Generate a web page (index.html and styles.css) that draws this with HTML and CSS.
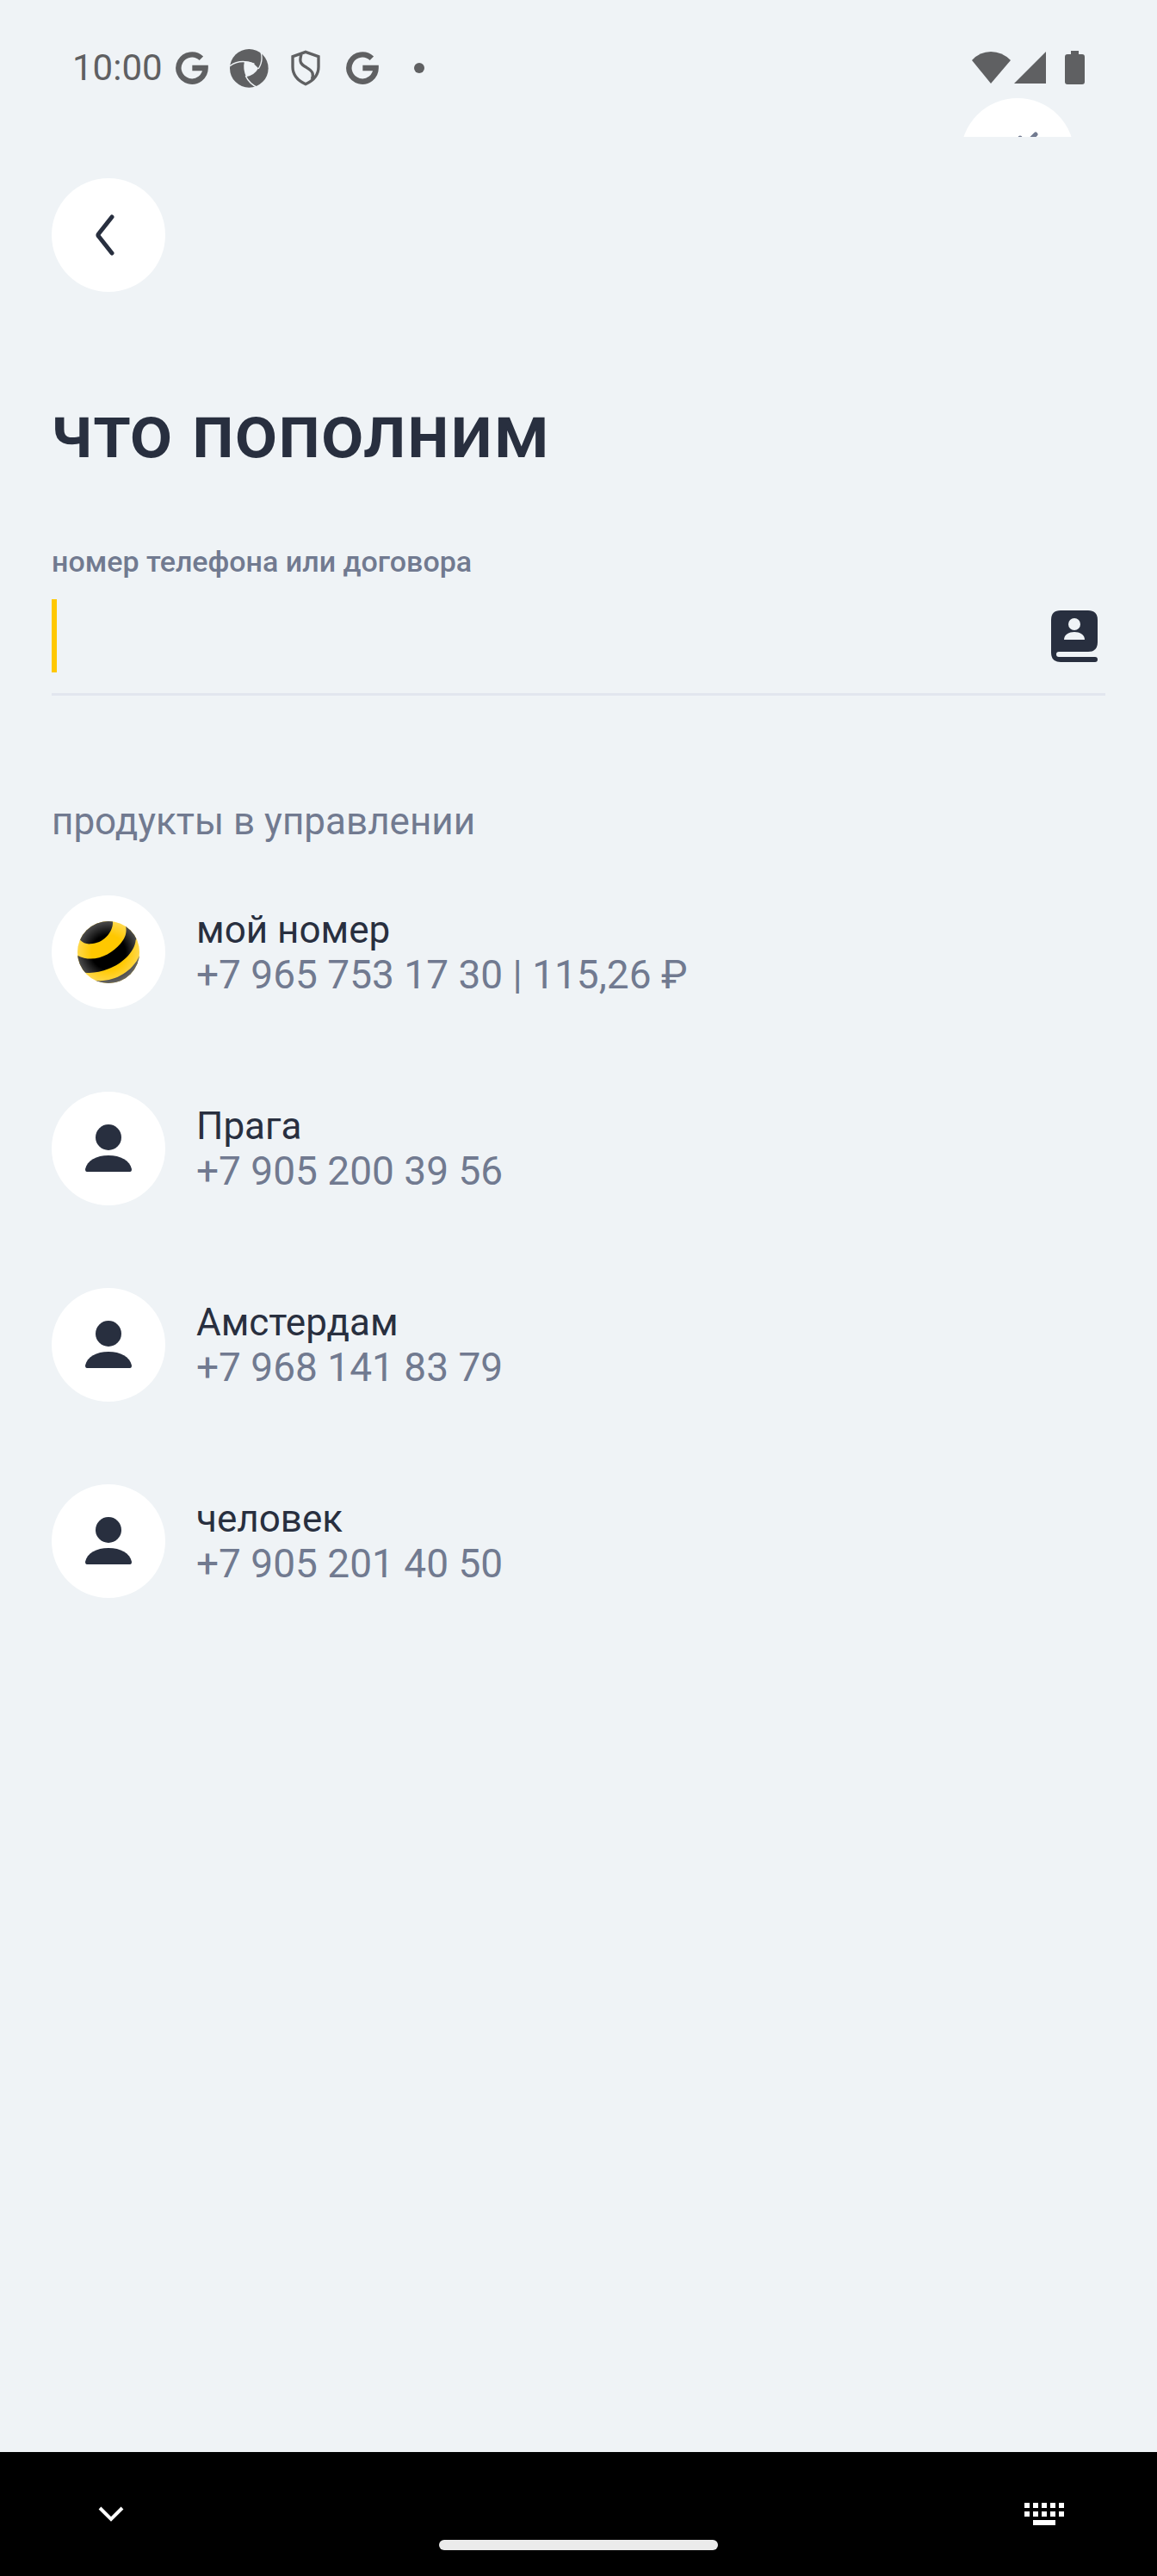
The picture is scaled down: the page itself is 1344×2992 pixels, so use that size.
FILE: index.html
```html
<!DOCTYPE html>
<html lang="ru">
<head>
<meta charset="utf-8">
<meta name="viewport" content="width=device-width, initial-scale=1">
<title>что пополним</title>
<link rel="stylesheet" href="styles.css">
</head>
<body>
<svg class="sprite" aria-hidden="true">
  <symbol id="icon-g" viewBox="0 0 112 112"><path d="M88 23A46 46 0 1 0 102 56H57" fill="none" stroke="currentColor" stroke-width="19"/></symbol>
  <symbol id="icon-person" viewBox="0 0 54 56"><circle cx="27" cy="15" r="15"/><path d="M2 55Q0 55 0 52C2 42 13 36 27 36S52 42 54 52Q54 55 52 55Z"/></symbol>
</svg>
<header class="status">
  <time class="clock">10:00</time>
  <span class="slot"><svg width="38" height="38"><use href="#icon-g"/></svg></span>
  <span class="slot"><svg width="45" height="45" viewBox="0 0 133 133"><circle cx="66" cy="66" r="66" fill="currentColor"/><g class="cut"><path d="M50 43Q70 41 82 50L98 66Q84 91 56 95Q44 69 50 43Z" stroke="none"/><path d="M0 58Q35 32 84 51M98 68Q116 40 106 8M54 92Q68 121 98 133" fill="none" stroke-width="4"/></g></svg></span>
  <span class="slot"><svg width="34" height="42" viewBox="0 0 102 124" fill="none" stroke="currentColor" stroke-width="10"><path d="M51 6 96 22V58C96 88 77 106 51 118C25 106 6 88 6 58V22Z"/><path d="M36 14C28 42 34 49 54 60C76 73 80 82 73 101"/></svg></span>
  <span class="slot"><svg width="38" height="38"><use href="#icon-g"/></svg></span>
  <span class="slot"><span class="dot"></span></span>
  <svg class="system" width="132" height="40" viewBox="0 0 132 40" fill="currentColor"><path d="M1 11Q10 1 23 1T46 11L23 38Z"/><path d="M87 1V38H50Z"/><path d="M116 0H125V4H129Q132 4 132 7V36Q132 39 129 39H112Q109 39 109 36V7Q109 4 112 4H116Z"/></svg>
</header>
<div class="peek"><button class="round" type="button" aria-label="закрыть"><svg width="60" height="60" viewBox="0 0 60 60" fill="none" stroke="currentColor" stroke-width="5" stroke-linecap="round"><path d="M33 10V20M51 6 41 16"/></svg></button></div>
<main class="content">
  <button class="round back" type="button" aria-label="назад"><svg width="28" height="50" viewBox="0 0 28 50" fill="none" stroke="currentColor" stroke-width="5" stroke-linecap="round" stroke-linejoin="round"><path d="M22 4 7 23Q5 25 7 27L22 46"/></svg></button>
  <h1 class="title">что пополним</h1>
  <label class="label" for="account">номер телефона или договора</label>
  <div class="field">
    <input class="input" id="account" type="tel">
    <button class="contacts" type="button" aria-label="контакты"><svg width="54" height="60" viewBox="0 0 54 60"><path fill="currentColor" d="M11 0H43Q54 0 54 11V37Q54 48 43 48H9a3 3 0 0 0 0 6H51a3 3 0 0 1 0 6H11Q0 60 0 49V11Q0 0 11 0Z"/><g class="cut"><circle cx="27" cy="16" r="7" stroke="none"/><path stroke="none" d="M15 34C15 22 39 22 39 34Z"/></g></svg></button>
  </div>
  <h2 class="section">продукты в управлении</h2>
  <ul class="list">
    <li><a class="row" href="#my"><span class="round"><svg width="72" height="72" viewBox="0 0 216 216">
      <defs>
        <clipPath id="ball"><circle cx="108" cy="108" r="108"/></clipPath>
        <radialGradient id="shine"><stop offset=".55" stop-color="#fff" stop-opacity="0"/><stop offset="1" stop-color="#fff" stop-opacity=".3"/></radialGradient>
      </defs>
      <g clip-path="url(#ball)" fill="#000"><rect width="216" height="216" fill="#ffc800"/><path d="M122-5C130 30 95 78 45 79C30 80 18 75 10 66L-10 0Z"/><path d="M-5 116C50 150 115 120 150 78C170 55 172 35 168 15L215 50 203 65C200 110 150 150 110 165C70 182 35 182 12 176L-10 170Z"/><path d="M60 206C120 215 190 180 216 120V216H60Z" fill="#222"/><rect width="216" height="216" fill="url(#shine)"/></g></svg></span>
      <span class="info"><span class="name">мой номер</span><span class="phone">+7 965 753 17 30 | 115,26 ₽</span></span></a></li>
    <li><a class="row" href="#praga"><span class="round"><svg width="54" height="56"><use href="#icon-person"/></svg></span>
      <span class="info"><span class="name">Прага</span><span class="phone">+7 905 200 39 56</span></span></a></li>
    <li><a class="row" href="#amsterdam"><span class="round"><svg width="54" height="56"><use href="#icon-person"/></svg></span>
      <span class="info"><span class="name">Амстердам</span><span class="phone">+7 968 141 83 79</span></span></a></li>
    <li><a class="row" href="#person"><span class="round"><svg width="54" height="56"><use href="#icon-person"/></svg></span>
      <span class="info"><span class="name">человек</span><span class="phone">+7 905 201 40 50</span></span></a></li>
  </ul>
</main>
<nav class="navbar">
  <button class="key" type="button" aria-label="скрыть клавиатуру"><svg width="30" height="20" viewBox="0 0 30 20" fill="none" stroke="currentColor" stroke-width="4"><path d="M2 3 15 16 28 3"/></svg></button>
  <span class="pill"></span>
  <button class="key key-end" type="button" aria-label="клавиатура"><svg width="46" height="26" viewBox="0 0 46 26" fill="none" stroke="currentColor" stroke-width="6"><path d="M0 3H46M0 13H46" stroke-dasharray="6 4"/><path d="M10 23H36"/></svg></button>
</nav>
</body>
</html>
```
FILE: styles.css
```css
:root {
  --bg: #eff3f6;
  --ink: #282f3f;
  --muted: #717a90;
  --status: #5f6062;
}

* {
  box-sizing: border-box;
}

body {
  margin: 0;
  min-height: 100vh;
  display: flex;
  flex-direction: column;
  background: var(--bg);
  color: var(--ink);
  font-family: Roboto, "Liberation Sans", sans-serif;
  font-size: 44px;
  line-height: 52px;
}

svg {
  display: block;
  flex: none;
}

button {
  border: 0;
  padding: 0;
  background: none;
  color: inherit;
  font: inherit;
}

.sprite {
  position: absolute;
  width: 0;
  height: 0;
}

.cut {
  fill: var(--bg);
  stroke: var(--bg);
}

.status {
  display: flex;
  align-items: center;
  height: 114px;
  padding: 44px 84px 0;
  color: var(--status);
}

.clock {
  width: 106px;
  font-size: 42px;
}

.slot {
  display: flex;
  justify-content: center;
  width: 66px;
}

.dot {
  width: 12px;
  height: 12px;
  border-radius: 50%;
  background: currentColor;
}

.system {
  margin-left: auto;
}

.peek {
  display: flex;
  justify-content: flex-end;
  height: 45px;
  padding-right: 96px;
  overflow: hidden;
  color: var(--muted);
}

.round {
  display: flex;
  flex: none;
  align-items: center;
  justify-content: center;
  width: 132px;
  height: 132px;
  border-radius: 50%;
  background: #fff;
  fill: currentColor;
}

.peek .round {
  color: var(--muted);
}

.content {
  flex: 1;
  padding: 48px 60px;
}

.back {
  padding-right: 8px;
}

.title {
  margin: 110px 0 79px;
  font-size: 88px;
  font-weight: 500;
  line-height: 104px;
}

.label {
  display: block;
  color: var(--muted);
  font-size: 34px;
  font-weight: 500;
  line-height: 40px;
}

.field {
  display: flex;
  align-items: center;
  padding: 24px 0;
  border-bottom: 3px solid #e2e6ee;
}

.input {
  flex: 1;
  min-width: 0;
  height: 85px;
  padding: 0 12px;
  border: 0;
  border-left: 6px solid #ffc800;
  border-radius: 0;
  background: none;
  color: inherit;
  font: inherit;
  outline: 0;
}

.contacts {
  display: flex;
  justify-content: center;
  width: 72px;
}

.section {
  margin: 120px 0 60px;
  color: var(--muted);
  font-size: 44px;
  font-weight: 400;
}

.list {
  display: grid;
  gap: 96px;
  margin: 0;
  padding: 0;
  list-style: none;
}

.row {
  display: flex;
  align-items: center;
  gap: 36px;
  color: inherit;
  text-decoration: none;
}

.info {
  display: grid;
}

.phone {
  color: var(--muted);
  font-size: 46px;
}

.navbar {
  display: grid;
  grid-template-columns: 1fr 324px 1fr;
  align-items: center;
  height: 144px;
  padding: 0 108px;
  background: #000;
  color: #fff;
}

.key {
  justify-self: start;
  padding: 0 6px;
}

.key-end {
  justify-self: end;
  padding: 0;
}

.pill {
  align-self: end;
  height: 12px;
  margin-bottom: 30px;
  border-radius: 6px;
  background: #ebebeb;
}
```
